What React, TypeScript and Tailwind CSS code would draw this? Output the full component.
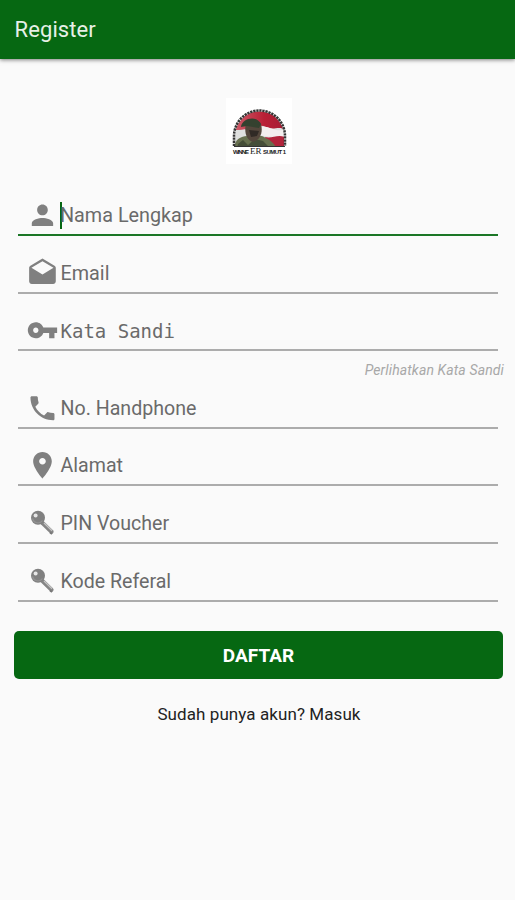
import type { ReactNode } from "react";

const paths = {
  person:
    "M12 12c2.21 0 4-1.79 4-4s-1.79-4-4-4-4 1.79-4 4 1.79 4 4 4zm0 2c-2.67 0-8 1.34-8 4v2h16v-2c0-2.66-5.33-4-8-4z",
  mail: "M21.99 8c0-.72-.37-1.35-.94-1.7L12 1 2.95 6.3C2.38 6.65 2 7.28 2 8v10c0 1.1.9 2 2 2h16c1.1 0 2-.9 2-2l-.01-10zM12 13L3.74 7.84 12 3l8.26 4.84L12 13z",
  key: "M12.65 10C11.83 7.67 9.61 6 7 6c-3.31 0-6 2.69-6 6s2.69 6 6 6c2.61 0 4.83-1.67 5.65-4H17v4h4v-4h2v-4H12.65zM7 14c-1.1 0-2-.9-2-2s.9-2 2-2 2 .9 2 2-.9 2-2 2z",
  phone:
    "M6.62 10.79c1.44 2.83 3.76 5.14 6.59 6.59l2.2-2.2c.27-.27.67-.36 1.02-.24 1.12.37 2.33.57 3.57.57.55 0 1 .45 1 1V20c0 .55-.45 1-1 1-9.39 0-17-7.61-17-17 0-.55.45-1 1-1h3.5c.55 0 1 .45 1 1 0 1.25.2 2.45.57 3.57.11.35.03.74-.25 1.02l-2.2 2.2z",
  place:
    "M12 2C8.13 2 5 5.13 5 9c0 5.25 7 13 7 13s7-7.75 7-13c0-3.87-3.13-7-7-7zm0 9.5c-1.38 0-2.5-1.12-2.5-2.5s1.12-2.5 2.5-2.5 2.5 1.12 2.5 2.5-1.12 2.5-2.5 2.5z",
};

function Glyph({ d }: { d: string }) {
  return (
    <svg viewBox="-0.35 -0.2 24 24" className="h-8 w-8 shrink-0 fill-[#808080]">
      <path d={d} />
    </svg>
  );
}

function RoundKey() {
  return (
    <svg viewBox="0 1 32 32" className="h-8 w-8 shrink-0">
      <path d="M16.5 17 25.5 25.8" stroke="#858585" strokeWidth="4.2" strokeLinecap="round" />
      <path d="M18 17 26 24.8" stroke="#c6c6c6" strokeWidth="1.2" />
      <path d="M24 26.5 26 28" stroke="#777777" strokeWidth="1.6" />
      <circle cx="12" cy="11.7" r="7" fill="#808080" />
      <path d="M6.5 12.5a5.6 5.6 0 0 0 10 2" fill="none" stroke="#929292" strokeWidth="1.2" />
      <circle cx="9.6" cy="9.4" r="2" fill="#e6e6e6" />
    </svg>
  );
}

function Field({
  icon,
  label,
  className = "h-[57px]",
  text = "text-[19.6px]",
  active = false,
}: {
  icon: ReactNode;
  label: string;
  className?: string;
  text?: string;
  active?: boolean;
}) {
  return (
    <div
      className={`ml-[18px] mr-[17px] flex flex-col justify-end ${className} ${
        active ? "border-b-2 border-[#1b7626]" : "border-b-2 border-[#acacac]"
      }`}
    >
      <div className="mb-[3px] flex h-8 items-center pl-2">
        {icon}
        <div className={`ml-[2.5px] flex items-center whitespace-nowrap text-[#6a6a6a] ${text}`}>
          {active && <span className="-mr-0.5 -ml-[0.5px] h-[27px] w-0.5 bg-[#056612]" />}
          <span className="pt-0.5">{label}</span>
        </div>
      </div>
    </div>
  );
}

function Logo() {
  return (
    <svg viewBox="0 0 66 66" className="h-[66px] w-[66px] bg-white">
      <defs>
        <clipPath id="dome">
          <path d="M9 49V38a24 24 0 0 1 49 0v11z" />
        </clipPath>
        <linearGradient id="flag" x1="0" y1="0" x2="1" y2="0">
          <stop offset="0" stopColor="#d0606d" />
          <stop offset="0.6" stopColor="#b91f35" />
          <stop offset="1" stopColor="#a51d34" />
        </linearGradient>
      </defs>
      <g clipPath="url(#dome)">
        <rect x="7" y="12" width="52" height="38" fill="#dfe0df" />
        <path d="M7 12h52v20c-6-5-11 1-19-3-9-4-17 4-33 3z" fill="url(#flag)" />
        <path d="M34 30c8-5 15 6 25 1v9c-9-1-15-1-25-3z" fill="#f3eeee" />
        <path d="M39 39c7 2 12-3 20 0v11H42z" fill="#b2243b" />
        <path d="M8 50c1-8 5-11 13-12h15c6 3 12 6 14 12z" fill="#67704f" />
        <path d="M12 46l5-4 5 5 7-6 8 2 7 7H11z" fill="#454e38" />
        <path d="M20 25c5-4 13-3 15 1 2 8 0 15-8 18-7-2-9-10-7-19z" fill="#54473c" />
        <path d="M15 29c1-9 16-12 20-3l-2 4-12-2z" fill="#34412f" />
        <path d="M23 32l10 1-2 5-6 1z" fill="#302a25" />
      </g>
      <path
        d="M8 48V38a25 25 0 0 1 51 0v10"
        fill="none"
        stroke="#343434"
        strokeWidth="2.5"
        strokeDasharray="2.3 0.8"
      />
      <path d="M8 48.5h51" stroke="#333" strokeWidth="1" />
      <g fill="#202020" fontFamily="Liberation Sans, sans-serif" fontWeight="700">
        <text x="7" y="55.5" fontSize="6" textLength="16">WINNE</text>
        <text x="24" y="55.5" fontFamily="Liberation Serif, serif" fontWeight="400" fontSize="9">ER</text>
        <text x="37" y="55.5" fontSize="6" textLength="23">SUMUT 1</text>
      </g>
    </svg>
  );
}

export default function App() {
  return (
    <main className="flex h-[900px] w-[515px] flex-col overflow-hidden bg-[#fafafa] font-[Roboto,sans-serif]">
      <header className="flex h-[59px] shrink-0 items-center bg-[#066812] pl-[14.5px] text-[22px] tracking-[0.1px] text-[#e6f0e7] shadow-[0_1px_4px_rgba(0,0,0,0.5)]">
        <h1>Register</h1>
      </header>
      <div className="mt-[39px] flex h-[66px] justify-center pl-[3px]">
        <Logo />
      </div>
      <form className="mt-[15px] flex flex-col">
        <Field icon={<Glyph d={paths.person} />} label="Nama Lengkap" text="text-[19.8px]" active />
        <Field icon={<Glyph d={paths.mail} />} label="Email" text="text-[19.8px]" className="h-[58px]" />
        <Field
          icon={<Glyph d={paths.key} />}
          label="Kata Sandi"
          text="font-['DejaVu_Sans_Mono',monospace] text-[19px]"
        />
        <div className="flex h-[38px] items-center justify-end pr-[11px] text-sm tracking-[0.13px] text-[#a8a8a8] italic">
          Perlihatkan Kata Sandi
        </div>
        <Field icon={<Glyph d={paths.phone} />} label="No. Handphone" className="h-10" />
        <Field icon={<Glyph d={paths.place} />} label="Alamat" />
        <Field icon={<RoundKey />} label="PIN Voucher" className="h-[58px]" />
        <Field icon={<RoundKey />} label="Kode Referal" className="h-[58px]" />
        <button
          type="button"
          className="mt-[29px] mr-3 ml-[14px] flex h-12 items-center justify-center rounded-[5px] bg-[#066812] pt-[3px] text-[19px] font-bold text-white"
        >
          DAFTAR
        </button>
      </form>
      <p className="mt-[23px] flex h-6 items-center justify-center pt-px pl-[3px] text-[17px] tracking-[0.08px] text-[#222222]">
        Sudah punya akun? Masuk
      </p>
    </main>
  );
}
